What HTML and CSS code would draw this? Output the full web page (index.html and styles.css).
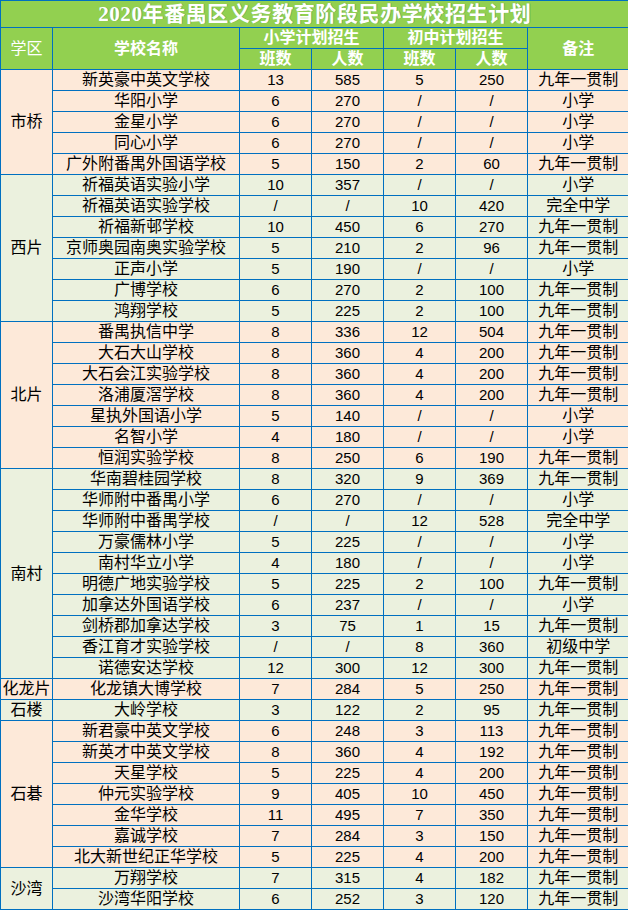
FILE: index.html
```html
<!DOCTYPE html>
<html lang="zh-CN">
<head>
<meta charset="utf-8">
<title>2020年番禺区义务教育阶段民办学校招生计划</title>
<link rel="stylesheet" href="styles.css">
</head>
<body>
<table class="plan">
<colgroup>
<col class="c-area"><col class="c-name"><col class="c-num"><col class="c-num"><col class="c-num"><col class="c-num"><col class="c-note">
</colgroup>
<thead>
<tr class="r-title"><th class="title" colspan="7">2020年番禺区义务教育阶段民办学校招生计划</th></tr>
<tr class="r-head"><th class="h-area" rowspan="2">学区</th><th class="h" rowspan="2">学校名称</th><th class="h" colspan="2">小学计划招生</th><th class="h" colspan="2">初中计划招生</th><th class="h" rowspan="2">备注</th></tr>
<tr class="r-head"><th class="h">班数</th><th class="h">人数</th><th class="h">班数</th><th class="h">人数</th></tr>
</thead>
<tbody class="peach">
<tr><td class="area" rowspan="5">市桥</td><td>新英豪中英文学校</td><td class="n">13</td><td class="n">585</td><td class="n">5</td><td class="n">250</td><td>九年一贯制</td></tr>
<tr><td>华阳小学</td><td class="n">6</td><td class="n">270</td><td class="n">/</td><td class="n">/</td><td>小学</td></tr>
<tr><td>金星小学</td><td class="n">6</td><td class="n">270</td><td class="n">/</td><td class="n">/</td><td>小学</td></tr>
<tr><td>同心小学</td><td class="n">6</td><td class="n">270</td><td class="n">/</td><td class="n">/</td><td>小学</td></tr>
<tr><td>广外附番禺外国语学校</td><td class="n">5</td><td class="n">150</td><td class="n">2</td><td class="n">60</td><td>九年一贯制</td></tr>
</tbody>
<tbody class="green">
<tr><td class="area" rowspan="7">西片</td><td>祈福英语实验小学</td><td class="n">10</td><td class="n">357</td><td class="n">/</td><td class="n">/</td><td>小学</td></tr>
<tr><td>祈福英语实验学校</td><td class="n">/</td><td class="n">/</td><td class="n">10</td><td class="n">420</td><td>完全中学</td></tr>
<tr><td>祈福新邨学校</td><td class="n">10</td><td class="n">450</td><td class="n">6</td><td class="n">270</td><td>九年一贯制</td></tr>
<tr><td>京师奥园南奥实验学校</td><td class="n">5</td><td class="n">210</td><td class="n">2</td><td class="n">96</td><td>九年一贯制</td></tr>
<tr><td>正声小学</td><td class="n">5</td><td class="n">190</td><td class="n">/</td><td class="n">/</td><td>小学</td></tr>
<tr><td>广博学校</td><td class="n">6</td><td class="n">270</td><td class="n">2</td><td class="n">100</td><td>九年一贯制</td></tr>
<tr><td>鸿翔学校</td><td class="n">5</td><td class="n">225</td><td class="n">2</td><td class="n">100</td><td>九年一贯制</td></tr>
</tbody>
<tbody class="peach">
<tr><td class="area" rowspan="7">北片</td><td>番禺执信中学</td><td class="n">8</td><td class="n">336</td><td class="n">12</td><td class="n">504</td><td>九年一贯制</td></tr>
<tr><td>大石大山学校</td><td class="n">8</td><td class="n">360</td><td class="n">4</td><td class="n">200</td><td>九年一贯制</td></tr>
<tr><td>大石会江实验学校</td><td class="n">8</td><td class="n">360</td><td class="n">4</td><td class="n">200</td><td>九年一贯制</td></tr>
<tr><td>洛浦厦滘学校</td><td class="n">8</td><td class="n">360</td><td class="n">4</td><td class="n">200</td><td>九年一贯制</td></tr>
<tr><td>星执外国语小学</td><td class="n">5</td><td class="n">140</td><td class="n">/</td><td class="n">/</td><td>小学</td></tr>
<tr><td>名智小学</td><td class="n">4</td><td class="n">180</td><td class="n">/</td><td class="n">/</td><td>小学</td></tr>
<tr><td>恒润实验学校</td><td class="n">8</td><td class="n">250</td><td class="n">6</td><td class="n">190</td><td>九年一贯制</td></tr>
</tbody>
<tbody class="green">
<tr><td class="area" rowspan="10">南村</td><td>华南碧桂园学校</td><td class="n">8</td><td class="n">320</td><td class="n">9</td><td class="n">369</td><td>九年一贯制</td></tr>
<tr><td>华师附中番禺小学</td><td class="n">6</td><td class="n">270</td><td class="n">/</td><td class="n">/</td><td>小学</td></tr>
<tr><td>华师附中番禺学校</td><td class="n">/</td><td class="n">/</td><td class="n">12</td><td class="n">528</td><td>完全中学</td></tr>
<tr><td>万豪儒林小学</td><td class="n">5</td><td class="n">225</td><td class="n">/</td><td class="n">/</td><td>小学</td></tr>
<tr><td>南村华立小学</td><td class="n">4</td><td class="n">180</td><td class="n">/</td><td class="n">/</td><td>小学</td></tr>
<tr><td>明德广地实验学校</td><td class="n">5</td><td class="n">225</td><td class="n">2</td><td class="n">100</td><td>九年一贯制</td></tr>
<tr><td>加拿达外国语学校</td><td class="n">6</td><td class="n">237</td><td class="n">/</td><td class="n">/</td><td>小学</td></tr>
<tr><td>剑桥郡加拿达学校</td><td class="n">3</td><td class="n">75</td><td class="n">1</td><td class="n">15</td><td>九年一贯制</td></tr>
<tr><td>香江育才实验学校</td><td class="n">/</td><td class="n">/</td><td class="n">8</td><td class="n">360</td><td>初级中学</td></tr>
<tr><td>诺德安达学校</td><td class="n">12</td><td class="n">300</td><td class="n">12</td><td class="n">300</td><td>九年一贯制</td></tr>
</tbody>
<tbody class="peach">
<tr><td class="area">化龙片</td><td>化龙镇大博学校</td><td class="n">7</td><td class="n">284</td><td class="n">5</td><td class="n">250</td><td>九年一贯制</td></tr>
</tbody>
<tbody class="green">
<tr><td class="area">石楼</td><td>大岭学校</td><td class="n">3</td><td class="n">122</td><td class="n">2</td><td class="n">95</td><td>九年一贯制</td></tr>
</tbody>
<tbody class="peach">
<tr><td class="area" rowspan="7">石碁</td><td>新君豪中英文学校</td><td class="n">6</td><td class="n">248</td><td class="n">3</td><td class="n">113</td><td>九年一贯制</td></tr>
<tr><td>新英才中英文学校</td><td class="n">8</td><td class="n">360</td><td class="n">4</td><td class="n">192</td><td>九年一贯制</td></tr>
<tr><td>天星学校</td><td class="n">5</td><td class="n">225</td><td class="n">4</td><td class="n">200</td><td>九年一贯制</td></tr>
<tr><td>仲元实验学校</td><td class="n">9</td><td class="n">405</td><td class="n">10</td><td class="n">450</td><td>九年一贯制</td></tr>
<tr><td>金华学校</td><td class="n">11</td><td class="n">495</td><td class="n">7</td><td class="n">350</td><td>九年一贯制</td></tr>
<tr><td>嘉诚学校</td><td class="n">7</td><td class="n">284</td><td class="n">3</td><td class="n">150</td><td>九年一贯制</td></tr>
<tr><td>北大新世纪正华学校</td><td class="n">5</td><td class="n">225</td><td class="n">4</td><td class="n">200</td><td>九年一贯制</td></tr>
</tbody>
<tbody class="green">
<tr><td class="area" rowspan="2">沙湾</td><td>万翔学校</td><td class="n">7</td><td class="n">315</td><td class="n">4</td><td class="n">182</td><td>九年一贯制</td></tr>
<tr><td>沙湾华阳学校</td><td class="n">6</td><td class="n">252</td><td class="n">3</td><td class="n">120</td><td>九年一贯制</td></tr>
</tbody>
</table>
</body>
</html>
```
FILE: styles.css
```css
html, body {
  margin: 0;
  padding: 0;
  background: #ffffff;
}
.plan {
  width: 628px;
  table-layout: fixed;
  border-collapse: collapse;
  font-family: "Liberation Sans", "Noto Sans CJK SC", sans-serif;
  font-size: 16px;
  color: #000000;
}
.c-area { width: 52px; }
.c-name { width: 187px; }
.c-num { width: 72px; }
.c-note { width: 101px; }
.plan th, .plan td {
  border: 1px solid #0070c0;
  padding: 0;
  text-align: center;
  vertical-align: middle;
  white-space: nowrap;
  overflow: hidden;
  line-height: 20px;
}
.r-title { height: 27px; }
.r-head { height: 21px; }
.plan tbody tr { height: 21px; }
.title {
  background: #92d050;
  color: #ffffff;
  font-family: "Liberation Serif", "Noto Sans CJK SC", serif;
  font-size: 21px;
  font-weight: bold;
  letter-spacing: 0.6px;
  line-height: 26px;
  border-top: none;
  border-left: none;
  border-right: none;
  text-shadow: 1px 0 0 rgba(40, 110, 120, 0.35);
}
.h, .h-area {
  background: #92d050;
  color: #ffffff;
  font-weight: bold;
  font-size: 16px;
}
.h-area {
  font-weight: normal;
  border-left: none;
}
.plan th:last-child { border-right: none; }
.plan td:last-child { border-right: none; }
.area {
  border-left: 1px solid #c5d9f1;
}
.peach td { background: #fde9d9; }
.green td { background: #ebf1de; }
.n {
  font-size: 15px;
}
```
